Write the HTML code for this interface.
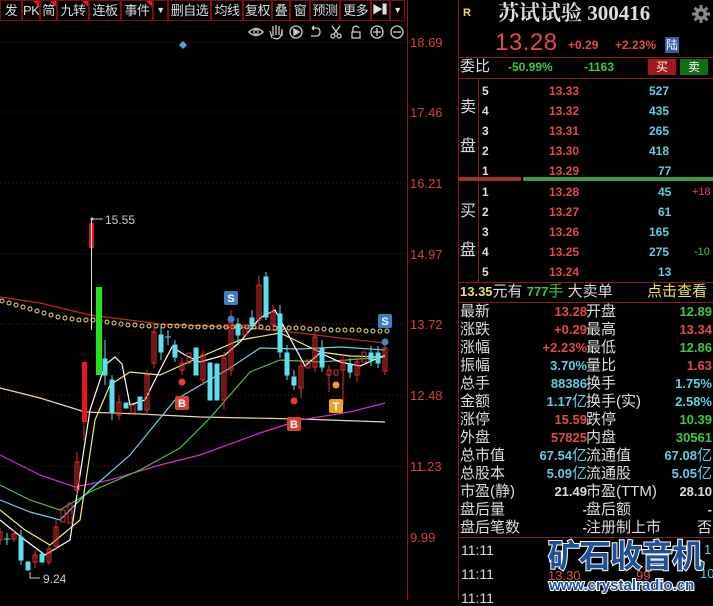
<!DOCTYPE html>
<html><head><meta charset="utf-8"><style>
*{margin:0;padding:0;box-sizing:border-box}
body{width:713px;height:600px;background:#000;overflow:hidden;position:relative;font-family:"Liberation Sans","Noto Sans CJK SC",sans-serif;}
.t{position:absolute;white-space:nowrap;line-height:1}
.tb{position:absolute;top:0;height:21px;border:1px solid #7a1010;color:#ddd;font-size:13px;line-height:19px;text-align:center;background:#000;white-space:nowrap;overflow:hidden;letter-spacing:-0.5px}
.tri{position:absolute;top:0;right:0;width:0;height:0;border-top:6px solid #d02020;border-left:6px solid transparent}
.r{color:#e24a4a}.c{color:#5cd0e0}.g{color:#3ec83e}.w{color:#ddd}.y{color:#e8e060}
.hl{position:absolute;left:458px;width:255px;height:1px;background:#8a1a1a}
</style></head><body>
<div class="tb" style="left:0;width:22px">发</div>
<div class="tb" style="left:22px;width:18px">PK<div class="tri"></div></div>
<div class="tb" style="left:40px;width:17px">简<div class="tri"></div></div>
<div class="tb" style="left:57px;width:32px">九转<div class="tri"></div></div>
<div class="tb" style="left:89px;width:32px">连板</div>
<div class="tb" style="left:121px;width:32px">事件<div class="tri"></div></div>
<div class="tb" style="left:153px;width:15px;font-size:9px">▼</div>
<div class="tb" style="left:168px;width:43px">删自选</div>
<div class="tb" style="left:211px;width:32px">均线</div>
<div class="tb" style="left:243px;width:29px">复权</div>
<div class="tb" style="left:272px;width:18px">叠</div>
<div class="tb" style="left:290px;width:20px">窗</div>
<div class="tb" style="left:310px;width:30px">预测</div>
<div class="tb" style="left:340px;width:31px">更多</div>
<div class="tb" style="left:371px;width:19px;font-size:11px">▶▍</div>
<div class="tb" style="left:390px;width:15px;font-size:9px">▼</div>

<svg width="713" height="600" style="position:absolute;left:0;top:0" xmlns="http://www.w3.org/2000/svg">
<line x1="407.5" y1="0" x2="407.5" y2="600" stroke="#8a1a1a"/>
<g stroke="#6a1414" stroke-dasharray="1 3">
<line x1="0" y1="42" x2="407" y2="42"/><line x1="0" y1="112" x2="407" y2="112"/><line x1="0" y1="183" x2="407" y2="183"/><line x1="0" y1="254" x2="407" y2="254"/><line x1="0" y1="324" x2="407" y2="324"/><line x1="0" y1="395" x2="407" y2="395"/><line x1="0" y1="466" x2="407" y2="466"/><line x1="0" y1="537" x2="407" y2="537"/>
</g>
<g fill="#d24040" font-size="13" font-family="Liberation Sans">
<text x="410" y="47">18.69</text><text x="410" y="117">17.46</text><text x="410" y="188">16.21</text><text x="410" y="259">14.97</text><text x="410" y="329">13.72</text><text x="410" y="400">12.48</text><text x="410" y="471">11.23</text><text x="410" y="542">9.99</text>
</g>
<g stroke="#ccc" fill="none" stroke-width="1.3">
<path d="M249 32 Q256 25 263 32 Q256 39 249 32Z"/><circle cx="256" cy="32" r="2.2"/>
<path d="M272 38 L270 31 M273 36 V26 M276 35 V25 M279 35 V26 M282 36 V29 Q282 38 277 39 L273 38"/>
<circle cx="296" cy="32" r="6"/><path d="M294 29 L299 32 L294 35Z" fill="#ccc"/>
<path d="M312 28 L316 28 Q320 28 320 32 Q320 36 316 36 L311 36 M312 28 L314 26 M312 28 L314 30"/>
<circle cx="333" cy="36" r="2"/><circle cx="339" cy="36" r="2"/><path d="M334 34 L340 26 M338 34 L332 26"/>
<path d="M352 32 H360 V38 H352Z M353 32 V28 Q356 24 359 28"/>
<circle cx="377" cy="32" r="6"/><path d="M373 32 H381 M377 28 V36"/>
<circle cx="397" cy="32" r="6"/><path d="M393 32 H401"/>
</g>
<path d="M183 41 L187 45 L183 49 L179 45Z" fill="#4aa8e0"/>
<g fill="none" stroke-width="1.2">
<polyline stroke="#c02828" points="0,297 40,303 90,315 160,324 250,328 300,333 340,338 385,343"/>
<polyline stroke="#f0d8b0" points="0,388 40,398 85,412 140,414 200,417 300,419 385,422"/>
<polyline stroke="#d030d0" points="0,455 40,475 75,487 110,480 160,465 200,455 260,433 300,420 350,412 385,403"/>
<polyline stroke="#50c040" points="0,485 30,500 60,510 90,492 140,470 180,448 210,418 250,372 280,360 320,362 385,357"/>
<polyline stroke="#6ad0e8" points="0,500 30,512 60,520 90,490 130,455 175,400 230,368 260,348 300,349 340,347 385,350"/>
<polyline stroke="#f0f070" points="0,510 25,530 50,545 80,520 95,420 110,385 130,372 160,375 200,357 240,340 280,333 320,352 350,356 385,357"/>
<polyline stroke="#ffffff" points="0,520 25,540 45,555 70,540 90,410 105,365 115,357 122,364 130,405 145,400 160,370 172,347 185,355 200,362 225,355 240,342 260,318 275,310 290,338 305,366 320,353 340,362 360,366 385,355"/>
</g>
<g fill="none" stroke="#f0e070" stroke-width="1">
<circle cx="2" cy="301" r="2"/><circle cx="9" cy="303" r="2"/><circle cx="16" cy="305" r="2"/><circle cx="23" cy="307" r="2"/><circle cx="30" cy="309" r="2"/><circle cx="37" cy="311" r="2"/><circle cx="44" cy="313" r="2"/><circle cx="51" cy="315" r="2"/><circle cx="58" cy="317" r="2"/><circle cx="65" cy="318" r="2"/><circle cx="72" cy="319" r="2"/><circle cx="79" cy="320" r="2"/><circle cx="86" cy="320" r="2"/><circle cx="93" cy="320" r="2"/><circle cx="100" cy="321" r="2"/><circle cx="107" cy="322" r="2"/><circle cx="114" cy="323" r="2"/><circle cx="121" cy="324" r="2"/><circle cx="128" cy="325" r="2"/><circle cx="135" cy="325" r="2"/><circle cx="142" cy="326" r="2"/><circle cx="149" cy="326" r="2"/><circle cx="156" cy="326" r="2"/><circle cx="163" cy="326" r="2"/><circle cx="170" cy="326" r="2"/><circle cx="177" cy="326" r="2"/><circle cx="184" cy="326" r="2"/><circle cx="191" cy="327" r="2"/><circle cx="198" cy="327" r="2"/><circle cx="205" cy="327" r="2"/><circle cx="212" cy="327" r="2"/><circle cx="219" cy="327" r="2"/><circle cx="226" cy="327" r="2"/><circle cx="233" cy="327" r="2"/><circle cx="240" cy="327" r="2"/><circle cx="247" cy="327" r="2"/><circle cx="254" cy="327" r="2"/><circle cx="261" cy="327" r="2"/><circle cx="268" cy="328" r="2"/><circle cx="275" cy="328" r="2"/><circle cx="282" cy="328" r="2"/><circle cx="289" cy="328" r="2"/><circle cx="296" cy="328" r="2"/><circle cx="303" cy="328" r="2"/><circle cx="310" cy="329" r="2"/><circle cx="317" cy="329" r="2"/><circle cx="324" cy="329" r="2"/><circle cx="331" cy="330" r="2"/><circle cx="338" cy="330" r="2"/><circle cx="345" cy="330" r="2"/><circle cx="352" cy="330" r="2"/><circle cx="359" cy="330" r="2"/><circle cx="366" cy="331" r="2"/><circle cx="373" cy="331" r="2"/><circle cx="380" cy="331" r="2"/><circle cx="387" cy="331" r="2"/>
</g>
<g stroke-width="1">
<g stroke="#e03030" fill="none">
<rect x="-2" y="532" width="4" height="8"/><rect x="12" y="534" width="4" height="5"/><rect x="33" y="555" width="4" height="7"/><rect x="47" y="549" width="4" height="13"/><rect x="54" y="527" width="4" height="19"/><rect x="61" y="510" width="4" height="12"/><rect x="68" y="503" width="4" height="20"/><rect x="75" y="462" width="4" height="28"/>
<rect x="117" y="402" width="4" height="13"/><rect x="131" y="405" width="4" height="8"/><rect x="145" y="375" width="4" height="35"/><rect x="152" y="332" width="4" height="31"/><rect x="180" y="363" width="4" height="7"/><rect x="187" y="353" width="4" height="10"/><rect x="201" y="355" width="4" height="25"/><rect x="222" y="358" width="4" height="42"/><rect x="229" y="322" width="4" height="48"/><rect x="243" y="325" width="4" height="10"/><rect x="257" y="285" width="4" height="35"/><rect x="271" y="312" width="4" height="13"/><rect x="299" y="366" width="4" height="22"/><rect x="306" y="360" width="4" height="8"/><rect x="313" y="337" width="4" height="30"/><rect x="327" y="370" width="4" height="5"/><rect x="334" y="370" width="4" height="5"/><rect x="341" y="360" width="4" height="10"/><rect x="355" y="362" width="4" height="13"/><rect x="362" y="352" width="4" height="10"/><rect x="383" y="348" width="4" height="23"/>
<path d="M0 528V545 M14 530V542 M35 550V568 M49 545V565 M56 520V550 M77 452V495 M84 420V440 M119 395V420 M147 370V415 M154 325V368 M182 358V375 M203 350V385 M224 352V410 M231 310V376 M259 275V325 M273 305V330 M301 360V398 M315 330V372 M329 365V392 M343 355V405 M357 355V382 M385 340V375"/>
</g>
<rect x="82" y="362" width="5" height="60" fill="#e81818"/>
<rect x="89" y="223" width="5" height="25" fill="#e81818"/>
<line x1="91.5" y1="219" x2="91.5" y2="330" stroke="#e0e0e0"/>
<rect x="96" y="287" width="6" height="88" fill="#22e022"/>
<g fill="#5ce0f0" stroke="#5ce0f0">
<rect x="19" y="537" width="4" height="23"/><rect x="26" y="562" width="4" height="8"/><rect x="40" y="554" width="4" height="8"/><rect x="103" y="359" width="4" height="16"/><rect x="110" y="380" width="4" height="33"/><rect x="124" y="403" width="4" height="5"/><rect x="138" y="397" width="4" height="13"/><rect x="159" y="335" width="4" height="17"/><rect x="173" y="345" width="4" height="12"/><rect x="194" y="348" width="4" height="27"/><rect x="208" y="363" width="4" height="37"/><rect x="215" y="364" width="4" height="36"/><rect x="236" y="324" width="4" height="11"/><rect x="250" y="318" width="4" height="8"/><rect x="264" y="277" width="4" height="40"/><rect x="278" y="314" width="4" height="38"/><rect x="285" y="353" width="4" height="22"/><rect x="292" y="377" width="4" height="8"/><rect x="320" y="348" width="4" height="19"/><rect x="348" y="365" width="4" height="7"/><rect x="369" y="353" width="4" height="7"/><rect x="376" y="353" width="4" height="10"/>
<path d="M21 530V565 M7 533V545 M4 539H10 M105 340V385 M112 375V420 M161 325V360 M168 330V345 M165 337H171 M175 340V362 M238 318V345 M252 310V330 M266 272V320 M280 305V358 M287 345V380 M294 370V390 M322 340V372 M350 358V378 M371 346V366 M378 346V368" fill="none"/>
</g>
</g>
<path d="M92 219 H103 M30 572 V578 H40" stroke="#ccc" fill="none"/>
<circle cx="92" cy="219" r="1.5" fill="#ccc"/>
<text x="105" y="224" fill="#ccc" font-size="12" font-family="Liberation Sans">15.55</text>
<text x="43" y="583" fill="#ccc" font-size="12" font-family="Liberation Sans">9.24</text>
<circle cx="182" cy="382" r="3.5" fill="#e04030"/><circle cx="294" cy="401" r="3.5" fill="#e04030"/><circle cx="336" cy="385" r="3.5" fill="#f0a020"/><circle cx="231" cy="319" r="3.5" fill="#4a80c8"/><circle cx="385" cy="342" r="3.5" fill="#4a80c8"/>
<g font-size="11" font-family="Liberation Sans" font-weight="bold" fill="#fff" text-anchor="middle">
<rect x="224" y="291" width="14" height="14" rx="2" fill="#3c7cc8"/><text x="231" y="302">S</text>
<rect x="378" y="314" width="14" height="14" rx="2" fill="#3c7cc8"/><text x="385" y="325">S</text>
<rect x="175" y="396" width="14" height="14" rx="2" fill="#d84030"/><text x="182" y="407">B</text>
<rect x="287" y="417" width="14" height="14" rx="2" fill="#d84030"/><text x="294" y="428">B</text>
<rect x="329" y="399" width="14" height="14" rx="2" fill="#f0a020"/><text x="336" y="410">T</text>
</g>
<line x1="458.5" y1="0" x2="458.5" y2="600" stroke="#8a1a1a"/>
<line x1="478.5" y1="78" x2="478.5" y2="282" stroke="#8a1a1a"/>
<rect x="459" y="177" width="62" height="4" fill="#a03030"/>
<rect x="523" y="177" width="190" height="4" fill="#3a9a3a"/>
<g transform="translate(701,14)" fill="#888"><circle r="6"/><path d="M-1.5 -9H1.5V9H-1.5Z M-9 -1.5V1.5H9V-1.5Z" /><path d="M-1.5 -9H1.5V9H-1.5Z" transform="rotate(45)"/><path d="M-1.5 -9H1.5V9H-1.5Z" transform="rotate(-45)"/><circle r="2.5" fill="#000"/></g>
</svg>

<div class="hl" style="top:57px"></div><div class="hl" style="top:78px"></div><div class="hl" style="top:282px"></div><div class="hl" style="top:302px"></div><div class="hl" style="top:537px"></div>

<div class="t y" style="left:463px;top:8px;font-size:11px;font-weight:bold">R</div>
<div class="t w" style="left:498px;top:3px;font-size:21px;font-weight:bold;font-family:'Liberation Serif','Noto Serif CJK SC',serif">苏试试验 300416</div>
<div class="t r" style="left:495px;top:31px;font-size:24px;letter-spacing:0.5px">13.28</div>
<div class="t r" style="left:568px;top:39px;font-size:12px;font-weight:bold">+0.29</div>
<div class="t r" style="left:615px;top:39px;font-size:12px;font-weight:bold">+2.23%</div>
<div class="t" style="left:665px;top:37px;width:14px;height:16px;background:#3a58a8;color:#fff;font-size:12px;line-height:16px;text-align:center">陆</div>

<div class="t w" style="left:460px;top:59px;font-size:15px">委比</div>
<div class="t g" style="left:508px;top:61px;font-size:12px;font-weight:bold">-50.99%</div>
<div class="t g" style="left:584px;top:61px;font-size:12px;font-weight:bold">-1163</div>
<div class="t" style="left:648px;top:59px;width:28px;height:16px;background:#a01818;color:#fff;font-size:12px;line-height:16px;text-align:center">买</div>
<div class="t" style="left:680px;top:59px;width:28px;height:16px;background:#107010;color:#fff;font-size:12px;line-height:16px;text-align:center">卖</div>

<div class="t w" style="left:460px;top:100px;font-size:16px">卖</div>
<div class="t w" style="left:460px;top:139px;font-size:16px">盘</div>
<div class="t w" style="left:460px;top:204px;font-size:16px">买</div>
<div class="t w" style="left:460px;top:243px;font-size:16px">盘</div>

<div style="position:absolute;left:482px;top:81px;font-size:12px;font-weight:bold;line-height:20px">
<div style="position:relative;height:20px"><span class="w">5</span><span class="r" style="position:absolute;left:67px">13.33</span><span class="c" style="position:absolute;left:167px">527</span></div>
<div style="position:relative;height:20px"><span class="w">4</span><span class="r" style="position:absolute;left:67px">13.32</span><span class="c" style="position:absolute;left:167px">435</span></div>
<div style="position:relative;height:20px"><span class="w">3</span><span class="r" style="position:absolute;left:67px">13.31</span><span class="c" style="position:absolute;left:167px">265</span></div>
<div style="position:relative;height:20px"><span class="w">2</span><span class="r" style="position:absolute;left:67px">13.30</span><span class="c" style="position:absolute;left:167px">418</span></div>
<div style="position:relative;height:20px"><span class="w">1</span><span class="r" style="position:absolute;left:67px">13.29</span><span class="c" style="position:absolute;left:176px">77</span></div>
</div>
<div style="position:absolute;left:482px;top:182px;font-size:12px;font-weight:bold;line-height:20px">
<div style="position:relative;height:20px"><span class="w">1</span><span class="r" style="position:absolute;left:67px">13.28</span><span class="c" style="position:absolute;left:176px">45</span><span class="r" style="position:absolute;left:210px;font-weight:normal;font-size:11px">+18</span></div>
<div style="position:relative;height:20px"><span class="w">2</span><span class="r" style="position:absolute;left:67px">13.27</span><span class="c" style="position:absolute;left:176px">61</span></div>
<div style="position:relative;height:20px"><span class="w">3</span><span class="r" style="position:absolute;left:67px">13.26</span><span class="c" style="position:absolute;left:167px">165</span></div>
<div style="position:relative;height:20px"><span class="w">4</span><span class="r" style="position:absolute;left:67px">13.25</span><span class="c" style="position:absolute;left:167px">275</span><span class="g" style="position:absolute;left:212px;font-weight:normal;font-size:11px">-10</span></div>
<div style="position:relative;height:20px"><span class="w">5</span><span class="r" style="position:absolute;left:67px">13.24</span><span class="c" style="position:absolute;left:176px">13</span></div>
</div>
<div class="t" style="left:460px;top:284px;font-size:15px"><span class="y" style="font-weight:bold;font-size:13px">13.35</span><span class="w">元有 </span><span class="g" style="font-weight:bold;font-size:13px">777</span><span class="g">手</span><span class="w"> 大卖单</span></div>
<div class="t y" style="left:647px;top:284px;font-size:15px">点击查看</div>

<div id="st" style="position:absolute;left:460px;top:303px;width:252px;font-size:15px;line-height:18px">
<style>#st div{position:relative;height:18px}#st b{position:absolute;font-weight:bold;font-size:13px}#st i{font-style:normal;position:absolute;left:126px;color:#ddd}</style>
<div><span class="w">最新</span><b class="r" style="right:125px">13.28</b><i>开盘</i><b class="g" style="right:0">12.89</b></div>
<div><span class="w">涨跌</span><b class="r" style="right:125px">+0.29</b><i>最高</i><b class="r" style="right:0">13.34</b></div>
<div><span class="w">涨幅</span><b class="r" style="right:125px">+2.23%</b><i>最低</i><b class="g" style="right:0">12.86</b></div>
<div><span class="w">振幅</span><b class="c" style="right:125px">3.70%</b><i>量比</i><b class="r" style="right:0">1.63</b></div>
<div><span class="w">总手</span><b class="c" style="right:125px">88386</b><i>换手</i><b class="c" style="right:0">1.75%</b></div>
<div><span class="w">金额</span><b class="c" style="right:125px">1.17<span style="font-weight:normal;font-size:15px">亿</span></b><i>换手(实)</i><b class="c" style="right:0">2.58%</b></div>
<div><span class="w">涨停</span><b class="r" style="right:125px">15.59</b><i>跌停</i><b class="g" style="right:0">10.39</b></div>
<div><span class="w">外盘</span><b class="r" style="right:125px">57825</b><i>内盘</i><b class="g" style="right:0">30561</b></div>
<div><span class="w">总市值</span><b class="c" style="right:125px">67.54<span style="font-weight:normal;font-size:15px">亿</span></b><i>流通值</i><b class="c" style="right:0">67.08<span style="font-weight:normal;font-size:15px">亿</span></b></div>
<div><span class="w">总股本</span><b class="c" style="right:125px">5.09<span style="font-weight:normal;font-size:15px">亿</span></b><i>流通股</i><b class="c" style="right:0">5.05<span style="font-weight:normal;font-size:15px">亿</span></b></div>
<div><span class="w">市盈(静)</span><b class="w" style="right:125px">21.49</b><i>市盈(TTM)</i><b class="w" style="right:0">28.10</b></div>
<div><span class="w">盘后量</span><b class="w" style="right:125px">-</b><i>盘后额</i><b class="w" style="right:0">-</b></div>
<div><span class="w">盘后笔数</span><b class="w" style="right:125px">-</b><i>注册制上市</i><span class="w" style="position:absolute;right:0">否</span></div>
</div>

<div class="t w" style="left:461px;top:543px;font-size:14px">11:11</div>
<div class="t w" style="left:461px;top:567px;font-size:14px">11:11</div>
<div class="t w" style="left:461px;top:591px;font-size:14px">11:11</div>
<div class="t r" style="left:548px;top:569px;font-size:13px">13.30</div>
<div class="t r" style="left:636px;top:569px;font-size:13px">99</div>
<div class="t c" style="left:704px;top:543px;font-size:13px">1</div>
<div class="t c" style="left:700px;top:567px;font-size:13px">10</div>

<div class="t" style="left:548px;top:538px;font-size:32px;font-weight:bold;color:#1d4f9a;-webkit-text-stroke:2px #fff;paint-order:stroke fill;letter-spacing:-1px;font-family:'WenQuanYi Zen Hei','Noto Sans CJK SC',sans-serif">矿石收音机</div>
<div class="t" style="left:549px;top:578px;font-size:15px;font-weight:bold;color:#1d4f9a;-webkit-text-stroke:2px #fff;paint-order:stroke fill">www.crystalradio.cn</div>
</body></html>
